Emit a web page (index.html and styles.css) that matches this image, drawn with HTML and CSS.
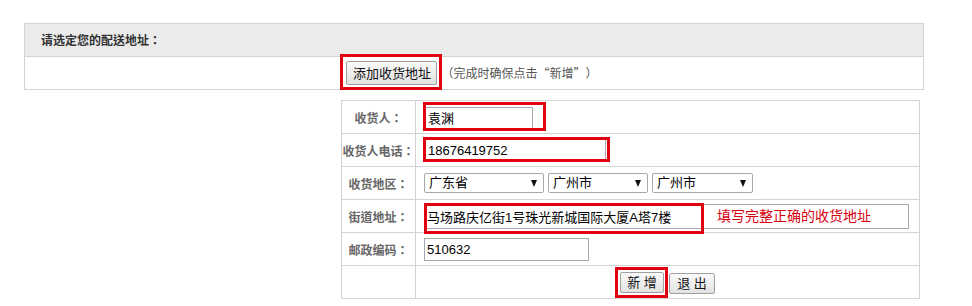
FILE: index.html
```html
<!DOCTYPE html>
<html lang="zh-CN">
<head>
<meta charset="utf-8">
<title>配送地址</title>
<link rel="stylesheet" href="styles.css">
</head>
<body>
<div class="panel">
  <div class="panel-head">请选定您的配送地址：</div>
  <div class="panel-body">
    <span class="mark mark-add"><button class="btn btn-add" type="button">添加收货地址</button></span>
    <span class="hint">（完成时确保点击“新增”）</span>
  </div>
</div>

<div class="form">
  <div class="row">
    <div class="label">收货人：</div>
    <div class="field">
      <span class="mark mark-name"><input class="text w-name" type="text" value="袁渊"></span>
    </div>
  </div>
  <div class="row">
    <div class="label">收货人电话：</div>
    <div class="field">
      <span class="mark mark-phone"><input class="text w-phone" type="text" value="18676419752"></span>
    </div>
  </div>
  <div class="row">
    <div class="label">收货地区：</div>
    <div class="field selects">
      <span class="sel w-prov"><select><option>广东省</option></select></span>
      <span class="sel w-city"><select><option>广州市</option></select></span>
      <span class="sel w-dist"><select><option>广州市</option></select></span>
    </div>
  </div>
  <div class="row">
    <div class="label">街道地址：</div>
    <div class="field">
      <span class="street">
        <input class="text w-street" type="text" value="马场路庆亿街1号珠光新城国际大厦A塔7楼">
        <span class="note">填写完整正确的收货地址</span>
      </span>
    </div>
  </div>
  <div class="row">
    <div class="label">邮政编码：</div>
    <div class="field">
      <input class="text w-zip" type="text" value="510632">
    </div>
  </div>
  <div class="row">
    <div class="label"></div>
    <div class="field actions">
      <span class="mark mark-save"><button class="btn btn-save" type="button">新 增</button></span>
      <button class="btn btn-exit" type="button">退 出</button>
    </div>
  </div>
</div>
</body>
</html>
```

FILE: styles.css
```css
* { box-sizing: border-box; }

body {
  margin: 0;
  background: #fff;
  font-family: "Liberation Sans", "Noto Sans CJK SC", sans-serif;
  font-size: 12px;
  color: #333;
  text-spacing-trim: space-all;
}

.panel {
  width: 900px;
  margin: 23px 0 0 24px;
  border: 1px solid #d3d3d3;
}

.panel-head {
  height: 33px;
  line-height: 32px;
  padding-left: 16px;
  background: #ebebeb;
  border-bottom: 1px solid #d3d3d3;
  font-weight: bold;
  color: #333;
}

.panel-head,
.label,
.hint {
  font-family: "Noto Sans CJK TC", "Noto Sans CJK SC", "Liberation Sans", sans-serif;
  font-feature-settings: "locl" 0;
}

.panel-body {
  height: 32px;
  display: flex;
  align-items: center;
  justify-content: center;
  padding-right: 4px;
}

.hint {
  margin-left: 4px;
  color: #555;
  font-size: 12px;
  line-height: 14px;
  white-space: nowrap;
}

.mark {
  position: relative;
  display: inline-flex;
}

.mark::after {
  content: "";
  position: absolute;
  border: 3px solid #e00010;
  pointer-events: none;
}

.mark-add::after { top: -7px; left: -6px; right: -5px; bottom: -5px; }
.mark-name::after { top: -4px; left: -1px; right: -13px; bottom: -2px; }
.mark-phone::after { top: -2px; left: -1px; right: -4px; bottom: -1px; }
.mark-save::after { top: -5px; left: -5px; right: -4px; bottom: -5px; }

.btn {
  margin: 0;
  padding: 0;
  font-family: "Liberation Sans", "Noto Sans CJK SC", sans-serif;
  font-size: 13px;
  line-height: 15px;
  color: #111;
  background: linear-gradient(#fafafa, #e2e2e2);
  border: 1px solid #a0a0a0;
  border-radius: 2px;
}

.btn-add { width: 91px; height: 24px; }
.btn-save { width: 44px; height: 21px; }
.btn-exit { width: 46px; height: 21px; margin-top: 2px; }

.form {
  width: 579px;
  margin: 10px 0 0 341px;
  border: 1px solid #d3d3d3;
  border-bottom: 0;
}

.row {
  display: grid;
  grid-template-columns: 74px 1fr;
  height: 33px;
  border-bottom: 1px solid #d3d3d3;
}

.label {
  border-right: 1px solid #d3d3d3;
  display: flex;
  align-items: center;
  justify-content: center;
  font-weight: bold;
  color: #666;
  font-size: 12px;
  white-space: nowrap;
}

.field {
  display: flex;
  align-items: center;
  padding-left: 8px;
}

.text {
  margin: 0;
  padding: 0 0 0 2px;
  font-family: "Liberation Sans", "Noto Sans CJK SC", sans-serif;
  font-size: 13px;
  color: #000;
  background: #fff;
  border: 1px solid #a9a9a9;
  border-radius: 0;
  outline: none;
}

.w-name { width: 108px; height: 22px; margin-left: 1px; margin-top: 1px; }
.w-phone { width: 181px; height: 22px; margin-left: 1px; }
.w-street { width: 485px; height: 25px; }
.w-zip { width: 165px; height: 23px; }

.selects { gap: 4px; }

.sel {
  position: relative;
  display: inline-flex;
}

.sel select {
  appearance: none;
  -webkit-appearance: none;
  margin: 0;
  width: 100%;
  height: 20px;
  padding: 0 0 0 4px;
  font-family: "Liberation Sans", "Noto Sans CJK SC", sans-serif;
  font-size: 13px;
  line-height: 18px;
  color: #000;
  background: #fff;
  border: 1px solid #a9a9a9;
  border-radius: 2px;
}

.sel::after {
  content: "";
  position: absolute;
  right: 7px;
  top: 7px;
  border-left: 3.5px solid transparent;
  border-right: 3.5px solid transparent;
  border-top: 7px solid #111;
  pointer-events: none;
}

.w-prov { width: 120px; }
.w-city { width: 100px; }
.w-dist { width: 101px; }

.street {
  position: relative;
  display: inline-flex;
}

.street::after {
  content: "";
  position: absolute;
  left: 0;
  top: -1px;
  width: 274px;
  height: 25px;
  border: 3px solid #e00010;
  pointer-events: none;
}

.note {
  position: absolute;
  left: 293px;
  top: 3px;
  font-size: 14px;
  line-height: 18px;
  color: #d8000f;
  white-space: nowrap;
}

.actions {
  justify-content: center;
  padding-left: 0;
  gap: 5px;
}
```
